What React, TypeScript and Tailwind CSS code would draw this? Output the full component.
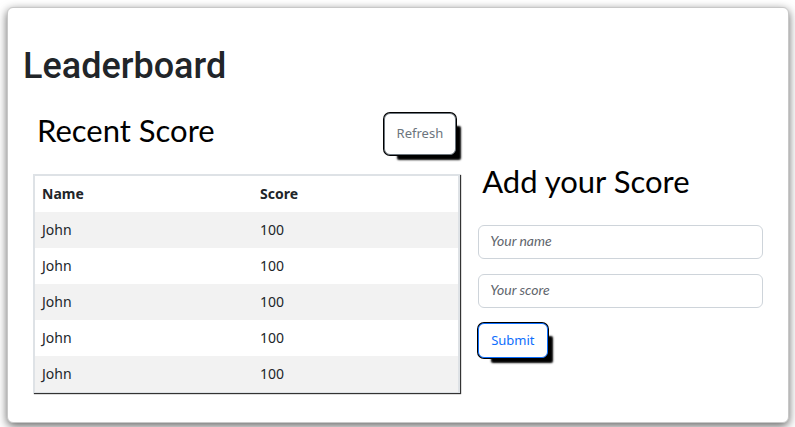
import React from "react";

const scores = [
  { name: "John", score: 100 },
  { name: "John", score: 100 },
  { name: "John", score: 100 },
  { name: "John", score: 100 },
  { name: "John", score: 100 },
];

const inputClass =
  "block h-[34px] w-full rounded-md border border-[#ced4da] bg-white px-[11px] pb-1 font-['Lato',cursive] text-sm text-[#212529] italic placeholder:text-[#5f666d]";

const buttonClass =
  "rounded-md border bg-white px-3 font-['Noto_Sans',sans-serif] text-[13px] shadow-[0_0_0_1px_#000,9px_9px_2px_-4px_#000]";

function ScoreTable() {
  return (
    <table className="w-full border-separate border-spacing-0 border-2 border-b border-[#dee2e6] text-left text-sm leading-5 text-[#212529] shadow-[1px_1px_1px_#333]">
      <thead>
        <tr>
          <th className="w-[52%] px-[7px] py-2 font-bold">Name</th>
          <th className="px-[5px] py-2 font-bold">Score</th>
        </tr>
      </thead>
      <tbody>
        {scores.map((entry, index) => (
          <tr key={index} className="odd:bg-[#f2f2f2]">
            <td className="px-[7px] py-2">{entry.name}</td>
            <td className="px-[5px] py-2">{entry.score}</td>
          </tr>
        ))}
      </tbody>
    </table>
  );
}

export default function App() {
  return (
    <div className="min-h-screen bg-white pt-[7px] pr-1.5 pb-1 pl-[7px]">
      <main className="rounded-md border border-[#c8c8c8] bg-white pt-9 pr-[25px] pb-[29px] pl-[15px] font-['Noto_Sans',sans-serif] shadow-[0_3px_10px_#666]">
        <h1 className="font-['Roboto',sans-serif] text-[36px] leading-11 font-medium text-[#212529]">
          Leaderboard
        </h1>
        <div className="mt-6 grid grid-cols-[3fr_2fr] gap-[18px] pl-2.5">
          <section>
            <div className="mb-[19px] flex items-start justify-between px-1">
              <h2 className="font-['Lato',sans-serif] text-[31px] leading-9 text-black">Recent Score</h2>
              <button type="button" className={`${buttonClass} mt-px h-[42px] border-[#6c757d] text-[#6c757d]`}>
                Refresh
              </button>
            </div>
            <ScoreTable />
          </section>
          <section className="pt-[51px]">
            <h2 className="mb-[26px] pl-1 font-['Lato',sans-serif] text-[31px] leading-9 text-black">
              Add your Score
            </h2>
            <form className="flex flex-col items-start gap-[15px]" onSubmit={(event) => event.preventDefault()}>
              <input type="text" aria-label="Your name" placeholder="Your name" className={inputClass} />
              <input type="text" aria-label="Your score" placeholder="Your score" className={inputClass} />
              <button type="submit" className={`${buttonClass} h-[35px] border-[#0d6efd] text-[#0d6efd]`}>
                Submit
              </button>
            </form>
          </section>
        </div>
      </main>
    </div>
  );
}
